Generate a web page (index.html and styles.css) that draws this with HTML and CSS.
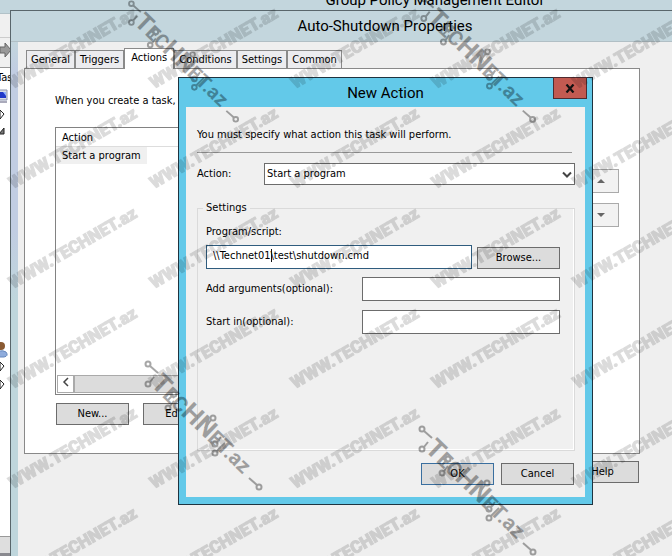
FILE: index.html
```html
<!DOCTYPE html>
<html lang="en">
<head>
<meta charset="utf-8">
<title>Auto-Shutdown Properties</title>
<link rel="stylesheet" href="styles.css">
</head>
<body>
<main class="desktop">
  <section class="editor">
    <h1 class="title editor-title">Group Policy Management Editor</h1>
    <div class="editor-menu"></div>
    <div class="editor-tools">
      <svg width="12" height="16" viewBox="0 0 12 16"><path d="M0 5h5V1l6 7-6 7v-4H0z" fill="#999" stroke="#666"/></svg>
    </div>
    <div class="tree">
      <span class="tree-title">Tas</span>
      <svg class="tree-icons" width="11" height="320" viewBox="0 0 11 320">
        <path d="M-2 1h9v10h-9z" fill="#d8dce6" stroke="#8b93ad"/><path d="M-1 3h7v6h-7z" fill="#2038c8"/><path d="M3 3h3v4z" fill="#8fb0ff"/><path d="M-1 12h8v2h-8z" fill="#aab"/>
        <path d="M0 21l4 4-4 5z" fill="#fff" stroke="#222"/>
        <path d="M4 39v6h-5z" fill="#777" stroke="#222"/>
        <circle cx="1" cy="257" r="4" fill="#8a5a32"/><path d="M-3 267q2-8 9-4 3 4-2 5h-7z" fill="#8facdc" stroke="#6688bd"/>
        <path d="M0 273l4 4-4 5zM0 291l4 4-4 5z" fill="#fff" stroke="#222"/>
      </svg>
    </div>
    <div class="editor-status"></div>
  </section>

  <section class="props">
    <h2 class="title props-title">Auto-Shutdown Properties</h2>
    <div class="props-client">
      <nav class="tabs">
        <button class="tab">General</button><button class="tab">Triggers</button><button class="tab tab-on">Actions</button><button class="tab">Conditions</button><button class="tab">Settings</button><button class="tab">Common</button>
      </nav>
      <div class="panel">
        <p class="hint">When you create a task, you must specify the action</p>
        <div class="list-row">
          <div class="list">
            <table class="list-table">
              <thead><tr><th>Action</th></tr></thead>
              <tbody><tr><td><span class="picked">Start a program</span></td></tr></tbody>
            </table>
            <div class="scroll">
              <button class="scroll-left" aria-label="Scroll left"><svg width="8" height="10" viewBox="0 0 8 10"><path d="M6 1L2 5l4 4" fill="none" stroke="#444" stroke-width="1.5"/></svg></button>
              <div class="thumb"></div>
            </div>
          </div>
          <div class="movers">
            <button class="mover" aria-label="Move up"><svg width="8" height="4"><path d="M0 4l4-4 4 4z" fill="#666"/></svg></button>
            <button class="mover" aria-label="Move down"><svg width="8" height="4"><path d="M0 0h8L4 4z" fill="#666"/></svg></button>
          </div>
        </div>
        <div class="panel-buttons">
          <button class="btn">New...</button>
          <button class="btn">Edit...</button>
        </div>
      </div>
      <div class="props-footer"><button class="btn">Help</button></div>
    </div>
  </section>

  <section class="dialog" role="dialog" aria-labelledby="dialog-title">
    <h2 class="title dialog-title" id="dialog-title">New Action</h2>
    <button class="close" aria-label="Close"><svg width="10" height="9" viewBox="0 0 10 9"><path d="M1.500 .5l7 8M8.500 .5l-7 8" stroke="#111" stroke-width="2.200"/></svg></button>
    <form class="dialog-client">
      <p class="lead">You must specify what action this task will perform.</p>
      <div class="action-row">
        <label for="action">Action:</label>
        <div class="select-box">
          <select id="action"><option>Start a program</option></select>
          <svg class="chevron" width="10" height="8" viewBox="0 0 10 8"><path d="M1 1.500l4 4 4-4" fill="none" stroke="#444" stroke-width="2"/></svg>
        </div>
      </div>
      <fieldset class="settings">
        <legend>Settings</legend>
        <label class="script-label" for="script">Program/script:</label>
        <div class="script-row">
          <div class="script-box"><input class="field field-on" id="script" type="text" value="\\Technet01\test\shutdown.cmd"><i class="caret"></i></div>
          <button type="button" class="btn browse">Browse...</button>
        </div>
        <div class="field-row"><label for="args">Add arguments(optional):</label><input class="field" id="args" type="text"></div>
        <div class="field-row"><label for="start">Start in(optional):</label><input class="field" id="start" type="text"></div>
      </fieldset>
      <div class="dialog-buttons">
        <button type="button" class="btn btn-default">OK</button>
        <button type="button" class="btn">Cancel</button>
      </div>
    </form>
  </section>

  <svg class="marks" width="100%" height="100%">
    <defs>
      <pattern id="site" x="5" y="-8" width="141" height="100" patternUnits="userSpaceOnUse">
        <text class="site-text" transform="translate(8 97) rotate(-30)">WWW.TECHNET.az</text>
      </pattern>
      <g id="logo">
        <text class="logo-text" transform="translate(12 26) rotate(44)"><tspan class="logo-cap">T</tspan>EC<tspan class="logo-cap">HN</tspan>ET.az</text>
        <g fill="none" stroke-width="2">
          <circle cx="10" cy="5" r="2.500"/><path d="M12 7l8 7"/>
          <circle cx="10" cy="25" r="2.500"/><path d="M12 23l4-5"/>
          <circle cx="36" cy="35" r="2.500"/><path d="M34 37l-4 4"/>
          <circle cx="30" cy="49" r="2.500"/><path d="M32 47l4-5"/>
          <circle cx="75" cy="59" r="2.500"/><path d="M73 61l-6 8"/>
          <circle cx="77" cy="85" r="2.500"/><path d="M79 83l4-5"/>
          <circle cx="77" cy="94" r="2.500"/><path d="M79 92l8-8"/>
          <circle cx="121" cy="128" r="2.500"/><path d="M119 126l-8-7"/>
        </g>
      </g>
    </defs>
    <rect width="100%" height="100%" fill="url(#site)"/>
    <use href="#logo" transform="translate(122 -1) scale(.94)"/>
    <use href="#logo" transform="translate(414 -6) scale(.98)"/>
    <use href="#logo" x="138" y="359"/>
    <use href="#logo" x="412" y="424"/>
  </svg>
</main>
</body>
</html>
```
FILE: styles.css
```css
* { box-sizing: border-box; }
body {
  margin: 0;
  font: 11px/14px "DejaVu Sans Condensed", "DejaVu Sans", sans-serif;
  color: #000;
}
button, input, select { font: inherit; color: inherit; padding: 0; margin: 0; border-radius: 0; }
p { margin: 0; }
.desktop { position: relative; height: 100vh; overflow: hidden; background: #fff; }
.title { margin: 0; font: 15px/20px Roboto, "Noto Sans", sans-serif; text-align: center; }

.editor { position: absolute; inset: 0; display: flex; flex-direction: column; }
.editor-title { height: 14px; padding-left: 198px; line-height: 0; background: #c3d6dd; border-bottom: 1px solid #b2c2c8; }
.editor-menu { height: 24px; background: #f0f0f0; border-bottom: 1px solid #ccc; }
.editor-tools { height: 30px; padding-top: 4px; background: #f0f0f0; border-bottom: 1px solid #999; }
.tree { flex: 1; background: #fff; padding-top: 3px; }
.tree-title { display: block; height: 18px; margin-left: -3px; }
.tree-icons { display: block; }
.editor-status { height: 20px; background: #dedede; border-top: 1px solid #999; border-bottom: 3px solid #89898f; }

.props {
  position: absolute; inset: 10px 0 0 10px;
  display: flex; flex-direction: column;
  padding-left: 7px;
  border: 1px solid #59666b; border-width: 1px 0 0 1px;
  background: linear-gradient(#c3d6dd 30px, #c1cde2 60px, #c1cde2 220px, #bfd6dc 290px);
}
.props-title { height: 31px; margin-left: -7px; padding: 5px 0 0 87px; background: #c3d6dd; border-bottom: 1px solid #b1bfc5; }
.props-client { flex: 1; padding: 6px 32px 0 6px; background: #efefef; }
.tabs { display: flex; align-items: flex-end; height: 20px; padding-left: 2px; }
.tab { height: 18px; padding: 0 4px; background: #ececef; border: 1px solid #8a8a8a; border-bottom: 0; }
.tab-on { position: relative; height: 21px; margin-bottom: -1px; padding: 0 6px 2px; background: #fff; }
.panel { height: 386px; padding: 25px 20px 0 30px; background: #fff; border: 1px solid #898989; }
.list-row { display: flex; gap: 16px; margin-top: 19px; }
.list { flex: 1; display: flex; flex-direction: column; height: 268px; border: 1px solid #828282; background: #fff; }
.list-table { border-collapse: collapse; width: 100%; }
.list-table th { height: 18px; padding: 2px 6px 0; font-weight: normal; text-align: left; border-bottom: 1px solid #ddd; }
.list-table td { padding: 0; }
.picked { display: inline-block; padding: 2px 6px 1px; background: #f0f0f0; }
.scroll { display: flex; height: 18px; margin: auto 1px 1px; background: #eee; }
.scroll-left { width: 17px; background: #fff; border: 1px solid #aaa; }
.thumb { width: 300px; background: #dcdcdc; border: 1px solid #aaa; }
.movers { display: flex; flex-direction: column; gap: 10px; padding-top: 42px; }
.mover { width: 36px; height: 24px; background: #f2f2f2; border: 1px solid #aaa; line-height: 0; }
.panel-buttons { display: flex; gap: 14px; margin: 8px 0 0 1px; }
.btn { width: 73px; height: 22px; background: #dcdcdc; border: 1px solid #6c6c6c; }
.props-footer { display: flex; justify-content: flex-end; margin-top: 7px; padding-right: 1px; }

.dialog { position: absolute; left: 178px; top: 77px; width: 415px; padding: 0 7px 7px; background: #63c9e9; border: 1px solid #1f3440; }
.dialog-title { height: 29px; padding-top: 5px; }
.close { position: absolute; right: 5px; top: -1px; width: 34px; height: 22px; background: #c25a51; border: 1px solid #4f2b30; line-height: 0; }
.dialog-client { padding: 21px 10px 12px 11px; background: #f0f0f0; }
.lead { height: 25px; border-bottom: 1px solid #9a9a9a; margin-right: 3px; }
.action-row { display: grid; grid-template-columns: 67px 1fr; align-items: center; margin: 10px 0 16px; }
.select-box { position: relative; }
.select-box select { display: block; width: 100%; height: 22px; padding-left: 2px; appearance: none; background: #fff; border: 1px solid #6c6c6c; }
.chevron { position: absolute; right: 3px; top: 8px; }
.settings { height: 250px; margin: 0; padding: 10px 14px 0 8px; border: 1px solid #dadada; box-shadow: inset -1px -1px #fff; }
.settings legend { padding: 0 3px; margin-left: -3px; }
.script-label { display: block; height: 20px; }
.script-row { display: grid; grid-template-columns: 1fr 83px; gap: 5px; margin-bottom: 8px; align-items: end; }
.script-box { position: relative; }
.field { display: block; width: 100%; height: 24px; padding: 0 4px; background: #fff; border: 1px solid #6c6c6c; outline: 0; }
.field-on { padding: 0 6px 4px; border-color: #2f5c7e; }
.caret { position: absolute; left: 65px; top: 4px; width: 1px; height: 13px; background: #111; }
.browse { width: 100%; }
.field-row { display: grid; grid-template-columns: 156px 1fr; align-items: center; margin-bottom: 9px; }
.dialog-buttons { display: flex; justify-content: flex-end; gap: 7px; margin-top: 12px; padding-right: 1px; }
.btn-default { border-color: #3a6f9f; }

.marks { position: absolute; inset: 0; pointer-events: none; }
.site-text { font: 900 17px Roboto, "Liberation Sans", sans-serif; fill: #000; stroke: #000; stroke-width: 1px; opacity: .14; }
#logo { opacity: .34; fill: #000; stroke: #000; }
.logo-text { font: bold 21px Roboto, sans-serif; stroke: none; }
.logo-cap { font-size: 26px; }
```
